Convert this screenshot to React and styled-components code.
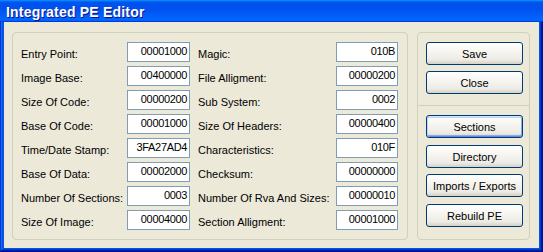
import React from 'react'
import styled, { createGlobalStyle, css } from 'styled-components'

const GlobalStyle = createGlobalStyle`
  html, body {
    margin: 0;
    padding: 0;
    height: 100%;
    overflow: hidden;
  }
  body {
    font-family: "Liberation Sans", Arial, sans-serif;
    font-size: 11px;
    color: #000;
  }
  #root {
    height: 100%;
  }
`

const Frame = styled.div`
  display: flex;
  flex-direction: column;
  height: 100vh;
  padding: 0 4px 4px;
  box-sizing: border-box;
  background: #0055ea;
  box-shadow: inset -1px -1px #00138c, inset 1px 0 #0831d9, inset -2px -2px #001ea0,
    inset 2px 0 #166aee, inset -3px -3px #003bda, inset 3px 0 #0855dd;
`

const TitleBar = styled.div`
  display: flex;
  align-items: center;
  height: 22px;
  margin: 0 -4px;
  padding: 1px 6px 0;
  box-sizing: border-box;
  background: linear-gradient(180deg, #0997ff, #0053ee 10%, #0050ee 40%, #06f 86%, #06f 92%, #005bff 95%, #003dd7 97%, #003dd7);
  color: #fff;
  font-size: 14px;
  font-weight: bold;
  letter-spacing: 0.2px;
  text-shadow: 1px 1px #0f1089;
`

const Body = styled.div`
  flex: 1;
  display: flex;
  gap: 9px;
  padding: 10px 9px 8px 8px;
  background: #ece9d8;
`

const GroupBox = styled.div`
  display: flex;
  flex-direction: column;
  border: 1px solid #d0d0bf;
  border-radius: 4px;
  box-sizing: border-box;
  ${(p) => p.$width && css`width: ${p.$width}px;`}
  padding: 9px 6px 0 8px;
`

const Fields = styled.div`
  display: flex;
  gap: 8px;
`

const FieldColumn = styled.div`
  display: grid;
  grid-template-columns: ${(p) => p.$label}px ${(p) => p.$input}px;
  grid-auto-rows: 24px;
`

const Label = styled.span`
  padding-top: 6px;
  line-height: 13px;
  white-space: nowrap;
`

const Value = styled.div`
  height: 20px;
  box-sizing: border-box;
  border: 1px solid #7f9db9;
  background: #fff;
  padding: 0 2px;
  text-align: right;
  line-height: 17px;
  font-size: 11px;
  letter-spacing: -0.35px;
`

const Button = styled.button`
  display: block;
  width: 97px;
  height: 23px;
  margin-top: ${(p) => p.$top || 0}px;
  border: 1px solid #003c74;
  border-radius: 3px;
  background: linear-gradient(180deg, #fff 0%, #f6f5f0 40%, #ecebe5 80%, #d6d0c5 100%);
  font-family: "Liberation Sans", Arial, sans-serif;
  font-size: 11px;
  color: #000;
  padding: 0;
  ${(p) =>
    p.$focused &&
    css`
      box-shadow: inset 0 1px #cee7ff, inset 1px 0 #bcd4f6, inset -1px 0 #89ade4,
        inset 0 -1px #6982ee, inset 0 2px #bcd4f6, inset 0 -2px #89ade4;
    `}
`

const Separator = styled.div`
  height: 0;
  margin: 11px -6px 9px -8px;
  border-top: 1px solid #d0d0bf;
`

const leftFields = [
  ['Entry Point:', '00001000'],
  ['Image Base:', '00400000'],
  ['Size Of Code:', '00000200'],
  ['Base Of Code:', '00001000'],
  ['Time/Date Stamp:', '3FA27AD4'],
  ['Base Of Data:', '00002000'],
  ['Number Of Sections:', '0003'],
  ['Size Of Image:', '00004000'],
]

const rightFields = [
  ['Magic:', '010B'],
  ['File Alligment:', '00000200'],
  ['Sub System:', '0002'],
  ['Size Of Headers:', '00000400'],
  ['Characteristics:', '010F'],
  ['Checksum:', '00000000'],
  ['Number Of Rva And Sizes:', '00000010'],
  ['Section Alligment:', '00001000'],
]

const renderFields = (list) =>
  list.map(([label, value]) => (
    <React.Fragment key={label}>
      <Label>{label}</Label>
      <Value>{value}</Value>
    </React.Fragment>
  ))

const App = () => {
  return (
    <>
      <GlobalStyle />
      <Frame>
        <TitleBar>Integrated PE Editor</TitleBar>
        <Body>
          <GroupBox $width={396}>
            <Fields>
              <FieldColumn $label={106} $input={63}>
                {renderFields(leftFields)}
              </FieldColumn>
              <FieldColumn $label={138} $input={62}>
                {renderFields(rightFields)}
              </FieldColumn>
            </Fields>
          </GroupBox>
          <GroupBox $width={113}>
            <Button>Save</Button>
            <Button $top={6}>Close</Button>
            <Separator />
            <Button $focused>Sections</Button>
            <Button $top={7}>Directory</Button>
            <Button $top={6}>Imports / Exports</Button>
            <Button $top={7}>Rebuild PE</Button>
          </GroupBox>
        </Body>
      </Frame>
    </>
  )
}

export default App
